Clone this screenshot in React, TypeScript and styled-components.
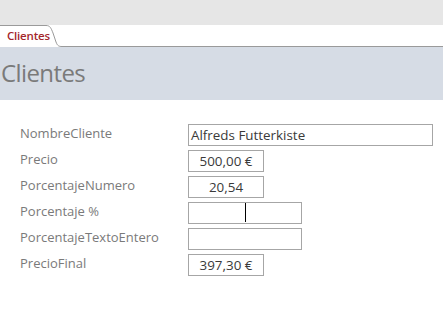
import React from "react";
import styled, { createGlobalStyle } from "styled-components";

const GlobalStyle = createGlobalStyle`
    html, body {
        margin: 0;
        padding: 0;
        background: #ffffff;
    }
    body {
        font-family: "Open Sans", "Noto Sans", sans-serif;
    }
`;

type Field = {
    label: string;
    value: string;
    width: number;
    align: "left" | "center";
    caret?: boolean;
};

const fields: Field[] = [
    { label: "NombreCliente", value: "Alfreds Futterkiste", width: 245, align: "left" },
    { label: "Precio", value: "500,00 €", width: 76, align: "center" },
    { label: "PorcentajeNumero", value: "20,54", width: 76, align: "center" },
    { label: "Porcentaje %", value: "", width: 114, align: "center", caret: true },
    { label: "PorcentajeTextoEntero", value: "", width: 114, align: "center" },
    { label: "PrecioFinal", value: "397,30 €", width: 76, align: "center" },
];

const App = () => {
    return (
        <Page>
            <GlobalStyle />
            <Ribbon />
            <TabStrip>
                <Tab>Clientes</Tab>
                <TabEdge width="18" height="22" viewBox="0 0 18 22">
                    <path
                        d="M0 0.5 H2 C6 0.5 7 3 9 8 L12 17 C13.5 21 15 21.5 18 21.5"
                        fill="none"
                        stroke="#9a9a9a"
                        strokeWidth="1"
                    />
                </TabEdge>
                <TabFill />
            </TabStrip>
            <Header>
                <Title>Clientes</Title>
            </Header>
            <Form>
                {fields.map((f) => (
                    <Row key={f.label}>
                        <Label>{f.label}</Label>
                        <Box style={{ width: f.width }} align={f.align}>
                            {f.value}
                            {f.caret && <Caret />}
                        </Box>
                    </Row>
                ))}
            </Form>
        </Page>
    );
};

export default App;

const Page = styled.div`
    width: 443px;
    height: 323px;
    overflow: hidden;
    background: #ffffff;
`;

const Ribbon = styled.div`
    height: 25px;
    background: #e6e6e6;
`;

const TabStrip = styled.div`
    display: flex;
    height: 22px;
    background: #ffffff;
`;

const Tab = styled.div`
    width: 44px;
    padding-left: 7px;
    box-sizing: border-box;
    border-top: 1px solid #9a9a9a;
    color: #a4262c;
    font-size: 11.5px;
    font-weight: 600;
    line-height: 20px;
    letter-spacing: -0.2px;
    white-space: nowrap;
`;

const TabEdge = styled.svg`
    display: block;
    flex: none;
`;

const TabFill = styled.div`
    flex: 1;
    border-bottom: 1px solid #9a9a9a;
`;

const Header = styled.div`
    height: 53px;
    background: #d6dce5;
    display: flex;
    align-items: center;
`;

const Title = styled.div`
    color: #7a7a7a;
    font-size: 24px;
    padding-left: 1px;
    margin-top: -3px;
    letter-spacing: -0.6px;
`;

const Form = styled.div`
    display: flex;
    flex-direction: column;
    gap: 4px;
    padding: 24px 0 0 20px;
`;

const Row = styled.div`
    display: grid;
    grid-template-columns: 168px auto;
    align-items: center;
    height: 22px;
`;

const Label = styled.div`
    color: #7a7a7a;
    font-size: 13px;
    margin-top: -4px;
    white-space: nowrap;
`;

const Box = styled.div<{ align: "left" | "center" }>`
    position: relative;
    height: 22px;
    box-sizing: border-box;
    border: 1px solid #a6a6a6;
    color: #3a3a3a;
    font-size: 13.4px;
    line-height: 20px;
    padding: 0 2px;
    text-align: ${({ align }) => align};
    white-space: nowrap;
`;

const Caret = styled.span`
    position: absolute;
    left: 50%;
    top: 0;
    width: 1px;
    height: 19px;
    background: #000000;
`;
